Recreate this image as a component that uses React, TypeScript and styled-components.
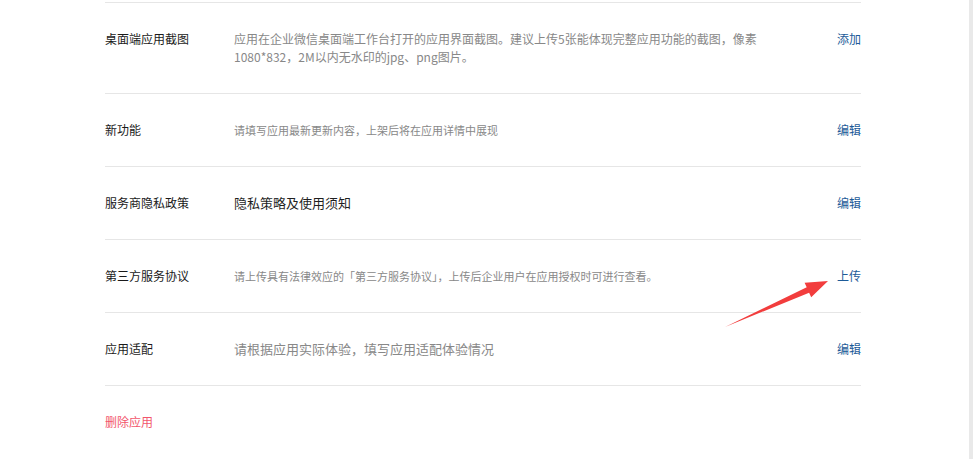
import { createGlobalStyle } from 'styled-components';
import styled from 'styled-components';

const GlobalStyle = createGlobalStyle`
  html, body {
    margin: 0;
    padding: 0;
    background: #ffffff;
  }
  body {
    font-family: "Noto Sans CJK SC", "Liberation Sans", sans-serif;
    color: #1a1a1a;
  }
`;

const Page = styled.div`
  position: relative;
  display: flex;
  width: 100vw;
  height: 100vh;
  overflow: hidden;
`;

const Main = styled.div`
  flex: 1;
  padding: 2px 0 0 105px;
`;

const ScrollTrack = styled.div`
  width: 4px;
  background: #e9e9e9;
`;

const List = styled.div`
  width: 756px;
  border-top: 1px solid #e6e6e6;
`;

const Row = styled.div`
  display: grid;
  grid-template-columns: 129px 1fr auto;
  align-items: start;
  padding: 27px 0;
  border-bottom: 1px solid #e6e6e6;
  line-height: 18px;
`;

const Label = styled.div`
  font-size: 12px;
  color: #1a1a1a;
`;

const Desc = styled.div<{ $size: number; $dark?: boolean }>`
  max-width: 526px;
  font-size: ${(p) => p.$size}px;
  color: ${(p) => (p.$dark ? '#1f1f1f' : '#888888')};
`;

const Action = styled.a`
  font-size: 12px;
  color: #1d5b98;
  text-decoration: none;
  cursor: pointer;
`;

const DeleteLink = styled.a`
  display: inline-block;
  margin-top: 27px;
  font-size: 12px;
  line-height: 18px;
  color: #f2566c;
  cursor: pointer;
`;

const Pointer = styled.svg`
  position: absolute;
  left: 720px;
  top: 270px;
`;

type Item = {
  label: string;
  desc: string;
  size: number;
  dark?: boolean;
  action: string;
};

const items: Item[] = [
  {
    label: '桌面端应用截图',
    desc: '应用在企业微信桌面端工作台打开的应用界面截图。建议上传5张能体现完整应用功能的截图，像素 1080*832，2M以内无水印的jpg、png图片。',
    size: 12,
    action: '添加',
  },
  {
    label: '新功能',
    desc: '请填写应用最新更新内容，上架后将在应用详情中展现',
    size: 11,
    action: '编辑',
  },
  {
    label: '服务商隐私政策',
    desc: '隐私策略及使用须知',
    size: 13,
    dark: true,
    action: '编辑',
  },
  {
    label: '第三方服务协议',
    desc: '请上传具有法律效应的「第三方服务协议」，上传后企业用户在应用授权时可进行查看。',
    size: 11,
    action: '上传',
  },
  {
    label: '应用适配',
    desc: '请根据应用实际体验，填写应用适配体验情况',
    size: 13,
    action: '编辑',
  },
];

export default function App() {
  return (
    <Page>
      <GlobalStyle />
      <Main>
        <List>
          {items.map((item) => (
            <Row key={item.label}>
              <Label>{item.label}</Label>
              <Desc $size={item.size} $dark={item.dark}>
                {item.desc}
              </Desc>
              <Action>{item.action}</Action>
            </Row>
          ))}
        </List>
        <DeleteLink>删除应用</DeleteLink>
      </Main>
      <ScrollTrack />
      <Pointer width="115" height="62" viewBox="0 0 115 62">
        <polygon
          points="5,57 86.7,17.3 84.6,12.7 108,11 91.2,27.3 89.1,22.7"
          fill="#f23d3d"
        />
      </Pointer>
    </Page>
  );
}
